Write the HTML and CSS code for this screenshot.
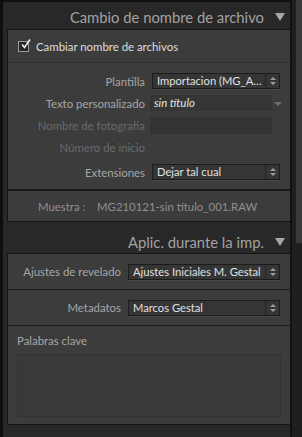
FILE: index.html
```html
<!DOCTYPE html>
<html lang="es">
<head>
    <meta charset="UTF-8">
    <title>Importar</title>
    <link rel="stylesheet" href="styles.css">
</head>
<body>
    <div class="columna">
        <div class="cabecera">
            <span>Cambio de nombre de archivo</span>
            <span class="triangulo"></span>
        </div>
        <div class="panel">
            <div class="fila-check">
                <span class="check">
                    <svg width="13" height="13" viewBox="0 0 13 13"><path d="M3 6.5 L5.5 9.5 L11 1.5" fill="none" stroke="#f0f0f0" stroke-width="1.6"/></svg>
                </span>
                <span>Cambiar nombre de archivos</span>
            </div>
            <div class="campos">
                <div class="fila">
                    <span class="etiqueta">Plantilla</span>
                    <div class="selector">
                        <span class="valor">Importacion (MG_A…</span>
                        <span class="flechas"></span>
                    </div>
                </div>
                <div class="fila">
                    <span class="etiqueta">Texto personalizado</span>
                    <div class="texto"><em>sin título</em></div>
                    <span class="mini-flecha"></span>
                </div>
                <div class="fila">
                    <span class="etiqueta apagada">Nombre de fotografía</span>
                    <div class="texto vacio"></div>
                </div>
                <div class="fila">
                    <span class="etiqueta apagada">Número de inicio</span>
                </div>
                <div class="fila separada">
                    <span class="etiqueta">Extensiones</span>
                    <div class="selector">
                        <span class="valor">Dejar tal cual</span>
                        <span class="flechas"></span>
                    </div>
                </div>
            </div>
            <div class="muestra">
                <span class="muestra-etiqueta">Muestra :</span>
                <span>MG210121-sin título_001.RAW</span>
            </div>
        </div>

        <div class="cabecera segunda">
            <span>Aplic. durante la imp.</span>
            <span class="triangulo"></span>
        </div>
        <div class="panel">
            <div class="fila-ancha">
                <span class="etiqueta corta">Ajustes de revelado</span>
                <div class="selector largo">
                    <span class="valor">Ajustes Iniciales M. Gestal</span>
                    <span class="flechas"></span>
                </div>
            </div>
            <div class="fila-ancha">
                <span class="etiqueta corta">Metadatos</span>
                <div class="selector largo">
                    <span class="valor">Marcos Gestal</span>
                    <span class="flechas"></span>
                </div>
            </div>
            <div class="palabras">
                <span class="etiqueta-palabras">Palabras clave</span>
                <div class="area"></div>
            </div>
        </div>
    </div>
    <div class="scroll">
        <div class="pulgar"></div>
    </div>
</body>
</html>
```

FILE: styles.css
```css
:root {
    --fondo: #282828;
    --panel: #3c3c3c;
    --borde: #151515;
    --etiqueta: #a6a6a6;
    --apagada: #6b6b6b;
    --valor: #dcdcdc;
}
* {
    box-sizing: border-box;
}
html, body {
    margin: 0;
    height: 100%;
}
body {
    display: flex;
    background-color: #0e0e0e;
    font-family: Lato, 'Open Sans', sans-serif;
    font-size: 11.4px;
    color: var(--valor);
    overflow: hidden;
}
.columna {
    margin-left: 3px;
    width: 289px;
    height: 100%;
    background-color: var(--fondo);
    border-top: 2px solid #111;
    border-right: 2px solid #101010;
    padding: 0 0 0 4px;
}
.cabecera {
    height: 27px;
    display: flex;
    justify-content: flex-end;
    align-items: center;
    gap: 11px;
    padding-right: 5px;
    padding-top: 2px;
    font-size: 14.8px;
    color: #a2a2a2;
}
.cabecera.segunda {
    height: 31px;
    padding-top: 8px;
}
.triangulo {
    width: 0;
    height: 0;
    border-left: 5px solid transparent;
    border-right: 5px solid transparent;
    border-top: 8px solid #a8a8a8;
    margin-top: 1px;
}
.panel {
    width: 284px;
    background-color: var(--panel);
    border: 1px solid var(--borde);
}
.fila-check {
    height: 33px;
    display: flex;
    align-items: center;
    gap: 7px;
    padding-left: 10px;
    border-bottom: 1px solid #313131;
    color: #dedede;
}
.check {
    width: 11px;
    height: 11px;
    border: 1px solid #9a9a9a;
    background-color: #262626;
    position: relative;
}
.check svg {
    position: absolute;
    left: 0;
    top: -4px;
}
.campos {
    padding: 7px 0 6px 0;
    border-bottom: 2px solid #1a1a1a;
}
.fila {
    height: 22px;
    display: flex;
    align-items: center;
}
.fila.separada {
    margin-top: 3px;
}
.etiqueta {
    width: 142px;
    text-align: right;
    color: var(--etiqueta);
    padding-right: 5px;
    flex-shrink: 0;
    white-space: nowrap;
}
.etiqueta.apagada {
    color: var(--apagada);
}
.etiqueta.corta {
    width: 120px;
    padding-right: 7px;
}
.selector {
    width: 128px;
    height: 16px;
    margin-left: 2px;
    display: flex;
    background-color: #353535;
    border: 1px solid #1c1c1c;
    box-shadow: 0 1px 0 #474747;
}
.selector.largo {
    width: 152px;
    margin-left: 0;
}
.valor {
    flex: 1;
    padding-left: 4px;
    line-height: 14px;
    font-size: 11.2px;
    color: #e0e0e0;
    white-space: nowrap;
    overflow: hidden;
}
.flechas {
    width: 14px;
    flex-shrink: 0;
    border-left: 1px solid #242424;
    position: relative;
}
.flechas::before, .flechas::after {
    content: "";
    position: absolute;
    left: 4px;
    border-left: 3px solid transparent;
    border-right: 3px solid transparent;
}
.flechas::before {
    top: 3px;
    border-bottom: 3px solid #9c9c9c;
}
.flechas::after {
    top: 8px;
    border-top: 3px solid #9c9c9c;
}
.texto {
    width: 122px;
    height: 16px;
    background-color: #353535;
    line-height: 16px;
    padding-left: 4px;
    color: #e4e4e4;
}
.texto.vacio {
    height: 17px;
    background-color: #333333;
}
.mini-flecha {
    margin-left: 2px;
    margin-top: 2px;
    border-left: 4px solid transparent;
    border-right: 4px solid transparent;
    border-top: 4px solid #6e6e6e;
}
.muestra {
    height: 30px;
    display: flex;
    align-items: center;
    padding-left: 30px;
    color: #8f8f8f;
}
.muestra-etiqueta {
    width: 59px;
}
.fila-ancha {
    height: 36px;
    display: flex;
    align-items: center;
    border-bottom: 1px solid #1c1c1c;
}
.palabras {
    padding: 8px 9px 7px 9px;
}
.etiqueta-palabras {
    display: block;
    line-height: 14px;
    color: #a6a6a6;
    margin-bottom: 6px;
}
.area {
    height: 63px;
    background-color: #393939;
    border: 1px solid #333;
}
.scroll {
    flex: 1;
    background-color: #1f1f1f;
    padding-left: 4px;
}
.pulgar {
    height: 243px;
    background-color: #3a3a3a;
}
```
